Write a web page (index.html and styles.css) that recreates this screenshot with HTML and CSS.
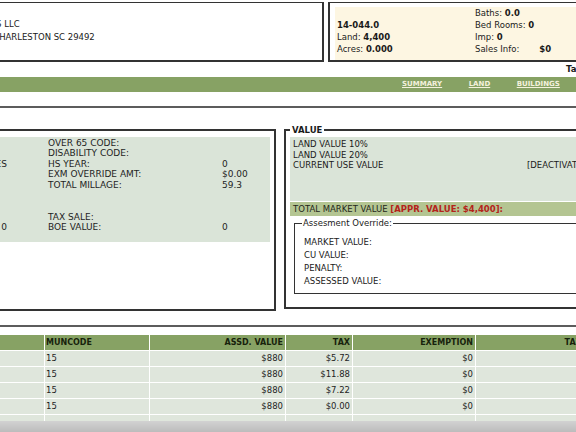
FILE: index.html
```html
<!DOCTYPE html>
<html>
<head>
<meta charset="utf-8">
<link rel="stylesheet" href="styles.css">
</head>
<body>
<div class="page">
  <div class="top">
    <div class="owner">
      <div>KIAWAH HOMES LLC</div>
      <div>PO BOX 1234 CHARLESTON SC 29492</div>
    </div>
    <div class="parcel">
      <div class="parcel-inner">
        <div></div><div>Baths: <b>0.0</b></div>
        <div><b>14-044.0</b></div><div>Bed Rooms: <b>0</b></div>
        <div>Land: <b>4,400</b></div><div>Imp: <b>0</b></div>
        <div>Acres: <b>0.000</b></div><div>Sales Info:<b class="sales">$0</b></div>
      </div>
    </div>
  </div>
  <div class="taxyear">Tax Year: 2023</div>
  <nav class="tabs">
    <a href="#">SUMMARY</a>
    <a href="#">LAND</a>
    <a href="#">BUILDINGS</a>
    <a href="#">SALES</a>
  </nav>
  <hr class="rule">
  <div class="middle">
    <div class="exempt">
      <div class="exempt-grid">
        <div>HOMESTEAD:</div><div class="b"></div><div class="d">OVER 65 CODE:</div><div></div>
        <div>DISABILITY:</div><div class="b"></div><div class="d">DISABILITY CODE:</div><div></div>
        <div>HOMESTEAD EX:</div><div class="b">YES</div><div class="d">HS YEAR:</div><div>0</div>
        <div>EXM CODE:</div><div class="b"></div><div class="d">EXM OVERRIDE AMT:</div><div>$0.00</div>
        <div>DISTRICT:</div><div class="b"></div><div class="d">TOTAL MILLAGE:</div><div>59.3</div>
        <div></div><div class="b"></div><div class="d"></div><div></div>
        <div></div><div class="b"></div><div class="d"></div><div></div>
        <div>ROLLBACK:</div><div class="b"></div><div class="d">TAX SALE:</div><div></div>
        <div>BOE YEAR:</div><div class="b">0</div><div class="d">BOE VALUE:</div><div>0</div>
      </div>
    </div>
    <fieldset class="value">
      <legend class="vlegend">VALUE</legend>
      <div class="vals">
        <div>LAND VALUE 10%</div><div></div>
        <div>LAND VALUE 20%</div><div></div>
        <div>CURRENT USE VALUE</div><div>[DEACTIVATED]</div>
      </div>
      <div class="total">TOTAL MARKET VALUE <span class="appr">[APPR. VALUE: $4,400]:</span></div>
      <fieldset class="override">
        <legend>Assesment Override:</legend>
        <div class="orow">MARKET VALUE:</div>
        <div class="orow">CU VALUE:</div>
        <div class="orow">PENALTY:</div>
        <div class="orow">ASSESSED VALUE:</div>
      </fieldset>
    </fieldset>
  </div>
  <hr class="rule rule2">
  <table class="taxes">
    <colgroup>
      <col class="c1"><col class="c2"><col class="c3"><col class="c4"><col class="c5"><col class="c6">
    </colgroup>
    <thead>
      <tr><th class="l">LEVY</th><th class="l">MUNCODE</th><th>ASSD. VALUE</th><th>TAX</th><th>EXEMPTION</th><th class="l6">TAXABLE VALUE</th></tr>
    </thead>
    <tbody>
      <tr><td class="l">COUNTY</td><td class="l">15</td><td>$880</td><td>$5.72</td><td>$0</td><td>$880</td></tr>
      <tr><td class="l">SCHOOL</td><td class="l">15</td><td>$880</td><td>$11.88</td><td>$0</td><td>$880</td></tr>
      <tr><td class="l">CITY</td><td class="l">15</td><td>$880</td><td>$7.22</td><td>$0</td><td>$880</td></tr>
      <tr><td class="l">FIRE</td><td class="l">15</td><td>$880</td><td>$0.00</td><td>$0</td><td>$880</td></tr>
      <tr class="spacer"><td class="l"></td><td class="l"></td><td></td><td></td><td></td><td></td></tr>
    </tbody>
  </table>
</div>
<div class="hscroll"></div>
</body>
</html>
```
FILE: styles.css
```css
html, body {
  margin: 0;
  padding: 0;
  overflow: hidden;
  background: #ffffff;
}
body {
  width: 576px;
  height: 432px;
  font-family: "DejaVu Sans", Verdana, sans-serif;
  font-size: 8.5px;
  color: #1a1a1a;
}
.page {
  width: 740px;
  margin-left: -100px;
  padding-top: 2px;
}
.top {
  display: flex;
  height: 60px;
}
.owner {
  box-sizing: border-box;
  width: 424px;
  height: 60px;
  border: 2px solid #333;
  border-top-width: 1px;
  padding: 14.5px 0 0 32px;
  line-height: 13px;
  white-space: nowrap;
  color: #1a1a1a;
}
.parcel {
  box-sizing: border-box;
  flex: 1;
  margin-left: 4px;
  height: 60px;
  border: 2px solid #333;
  border-top-width: 1px;
  border-right: none;
  padding: 4px 0 0 5px;
}
.parcel-inner {
  background: #fdf6e2;
  height: 53px;
  display: grid;
  grid-template-columns: 138px 1fr;
  grid-auto-rows: 12px;
  line-height: 12px;
  padding-left: 2px;
  white-space: nowrap;
}
.sales {
  margin-left: 20px;
}
.taxyear {
  height: 15px;
  line-height: 15px;
  padding-left: 666px;
  font-weight: bold;
  white-space: nowrap;
}
.tabs {
  height: 15px;
  background: #87a264;
  display: flex;
  gap: 26.5px;
  padding-left: 502px;
  line-height: 15px;
  white-space: nowrap;
}
.tabs a {
  color: #f4f1dc;
  font-size: 7px;
  font-weight: bold;
  text-decoration: underline;
}
hr.rule {
  border: 0;
  height: 2px;
  background: #5c5c5c;
  margin: 14px 0 16px;
}
hr.rule2 {
  margin: 14px 0 7px;
}
.middle {
  display: flex;
  align-items: flex-start;
  gap: 8px;
}
.exempt {
  box-sizing: border-box;
  width: 376px;
  height: 182px;
  margin-top: 5px;
  border: 2px solid #333;
  padding: 6px 4px 0 0;
  font-size: 9px;
}
.exempt-grid {
  background: #dae4d8;
  display: grid;
  grid-template-columns: 62px 40px 215px 1fr;
  grid-auto-rows: 10.6px;
  line-height: 10.6px;
  padding: 0.7px 0 9px 3px;
  white-space: nowrap;
  color: #1e1e1e;
}
.exempt-grid .b {
  text-align: right;
}
.exempt-grid .d {
  padding-left: 41px;
}
fieldset.value {
  box-sizing: border-box;
  width: 356px;
  margin: 0;
  padding: 0 0 13px 4px;
  border: 2px solid #333;
  min-width: 0;
}
.vlegend {
  font-weight: bold;
  line-height: 12px;
  padding: 0 2px;
  margin-left: 0;
}
.vals {
  margin-top: 1px;
  background: #dae4d8;
  padding: 2px 0 30.5px 3px;
  display: grid;
  grid-template-columns: 234px 1fr;
  grid-auto-rows: 10.5px;
  line-height: 10.5px;
  white-space: nowrap;
}
.total {
  margin-top: 1px;
  background: #b4c592;
  height: 14px;
  line-height: 14px;
  padding-left: 3px;
  white-space: nowrap;
  color: #23261a;
}
.appr {
  color: #b5231a;
  font-weight: bold;
}
fieldset.override {
  margin: 1px 0 0 4px;
  border: 1px solid #333;
  border-right: none;
  padding: 6.5px 0 4px 9px;
  min-width: 0;
}
.override legend {
  padding: 0 1px;
  margin-left: -2px;
  line-height: 12px;
}
.orow {
  line-height: 13.3px;
  white-space: nowrap;
}
table.taxes {
  border-collapse: separate;
  border-spacing: 1px;
  table-layout: fixed;
  width: 740px;
  background: #ffffff;
}
col.c1 { width: 143px; }
col.c2 { width: 104px; }
col.c3 { width: 135px; }
col.c4 { width: 66px; }
col.c5 { width: 122px; }
col.c6 { width: 163px; }
th {
  background: #87a264;
  color: #17220c;
  font-size: 8px;
  font-weight: bold;
  height: 15px;
  padding: 0 2px;
  line-height: 15px;
  text-align: right;
  white-space: nowrap;
  overflow: hidden;
}
td {
  background: #dfe6dc;
  height: 15px;
  padding: 0 2px;
  line-height: 15px;
  text-align: right;
  white-space: nowrap;
  overflow: hidden;
  color: #1e1e1e;
}
th.l, td.l {
  text-align: left;
  padding-left: 1px;
}
th.l6 {
  padding-right: 3px;
}
.hscroll {
  position: fixed;
  left: 0;
  right: 0;
  bottom: 0;
  height: 11px;
  background: linear-gradient(#d2d2d2, #bcbcbc);
}
```
